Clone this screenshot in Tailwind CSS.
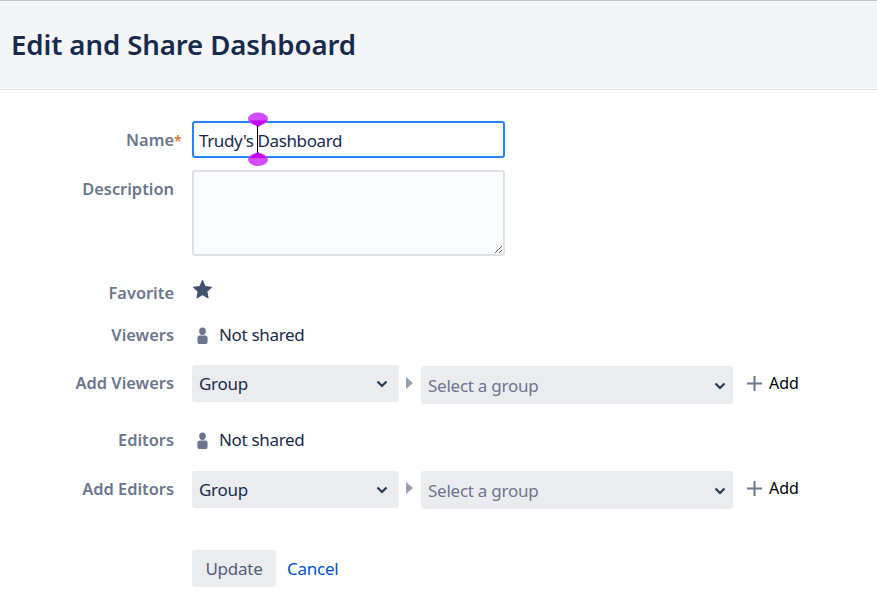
<!DOCTYPE html>
<html><head><meta charset="utf-8"><title>Edit and Share Dashboard</title>
<script src="https://cdn.jsdelivr.net/npm/@tailwindcss/browser@4"></script></head>
<body class="bg-white font-['Noto_Sans',sans-serif] text-[#172b4d] text-[17px] overflow-hidden">
<header class="h-[90px] bg-[#f4f5f7] border-t border-t-[#c1c7d0] border-b border-b-[#dfe1e6] flex items-center pl-[11px]">
  <h1 class="text-[27.6px] font-semibold tracking-[-0.1px]">Edit and Share Dashboard</h1>
</header>
<main class="grid grid-cols-[174px_1fr] gap-x-[18px] pt-[31px] text-[17px]">
  <label class="relative h-[37px] pt-[1px] flex items-center justify-end font-semibold text-[#6b778c] text-[16.4px]">Name<span class="absolute left-full text-[14px] text-[#de5b0b] font-normal">*</span></label>
  <div class="relative w-[313px] h-[37px]">
    <input value="Trudy's Dashboard" class="w-full h-full rounded-[3px] border-2 border-[#2684ff] bg-white pl-[5px] pt-[2px] outline-none text-[17px] tracking-[-0.4px]">
    <svg class="absolute left-[55px] -top-[8px] overflow-visible" width="22" height="55" viewBox="0 0 22 55">
      <ellipse cx="11" cy="6" rx="10" ry="6.500" fill="#d24dff"/>
      <path d="M1.500 7.500C4 8.500 7 11 11 14.500C15 11 18 8.500 20.500 7.500Z" fill="#c400ff"/>
      <rect x="10" y="12" width="1" height="30" fill="#000"/>
      <ellipse cx="11" cy="46.500" rx="10" ry="6.500" fill="#d24dff"/>
      <path d="M1.500 45C4 44 7 41.500 11 39C15 41.500 18 44 20.500 45Z" fill="#c400ff"/>
    </svg>
  </div>

  <label class="mt-[12px] h-[38px] pt-[1px] flex items-center justify-end font-semibold text-[#6b778c] text-[16.4px]">Description</label>
  <textarea class="mt-[12px] w-[313px] h-[86px] rounded-[3px] border-2 border-[#dfe1e6] bg-[#fafbfc] outline-none block"></textarea>

  <label class="mt-[22px] h-[30px] flex items-center justify-end font-semibold text-[#6b778c] text-[16.4px]">Favorite</label>
  <div class="mt-[22px] h-[30px] flex items-start">
    <svg width="21" height="21" viewBox="0 0 20 20" class="mt-[1px]"><path d="M10 1.500l2.500 5.700 6 .6-4.400 4.100 1.200 6-5.300-3-5.300 3 1.200-6L1.500 7.800l6-.6z" fill="#42526e" stroke="#42526e" stroke-width="1" stroke-linejoin="round"/></svg>
  </div>

  <label class="mt-[12px] h-[30px] flex items-center justify-end font-semibold text-[#6b778c] text-[16.4px]">Viewers</label>
  <div class="mt-[12px] h-[30px] flex items-center gap-[11px] pl-[5px]">
    <svg width="11" height="17" viewBox="0 0 13 18" preserveAspectRatio="none"><circle cx="6.500" cy="4.500" r="3.900" fill="#6b778c"/><rect x="0.500" y="9" width="12" height="9" rx="3" fill="#6b778c"/></svg>
    <span class="tracking-[-0.33px]">Not shared</span>
  </div>

  <label class="mt-[15px] h-[37px] flex items-center justify-end font-semibold text-[#6b778c] text-[16.4px]">Add Viewers</label>
  <div class="mt-[15px] flex items-start">
    <div class="relative w-[207px] h-[37px]">
      <select class="appearance-none w-full h-full rounded-[3px] bg-[#ebecf0] pl-[7px] text-[17px] outline-none tracking-[-0.3px]"><option>Group</option></select>
      <svg class="absolute right-[11px] top-[15px]" width="12" height="8" viewBox="0 0 12 8"><path d="M1.500 1.500L6 6l4.500-4.500" fill="none" stroke="#253858" stroke-width="2.200"/></svg>
    </div>
    <svg class="ml-[7px] mr-[7px] mt-[12px]" width="8" height="12" viewBox="0 0 8 12"><path d="M0 0l7 6-7 6z" fill="#97a0af"/></svg>
    <div class="relative w-[312px] h-[38px] mt-[1px]">
      <select class="appearance-none w-full h-full rounded-[3px] bg-[#ebecf0] pl-[7px] pt-[2px] text-[17px] text-[#6b778c] outline-none tracking-[-0.25px]"><option>Select a group</option></select>
      <svg class="absolute right-[7px] top-[16px]" width="12" height="8" viewBox="0 0 12 8"><path d="M1.500 1.500L6 6l4.500-4.500" fill="none" stroke="#253858" stroke-width="2.200"/></svg>
    </div>
    <div class="ml-[14px] h-[36px] flex items-center gap-[7px] text-[16px] text-black">
      <svg width="15" height="15" viewBox="0 0 15 15"><path d="M7.500 0v15M0 7.500h15" stroke="#6b778c" stroke-width="2"/></svg><span>Add</span>
    </div>
  </div>

  <label class="mt-[21px] h-[30px] flex items-center justify-end font-semibold text-[#6b778c] text-[16.4px]">Editors</label>
  <div class="mt-[21px] h-[30px] flex items-center gap-[11px] pl-[5px]">
    <svg width="11" height="17" viewBox="0 0 13 18" preserveAspectRatio="none"><circle cx="6.500" cy="4.500" r="3.900" fill="#6b778c"/><rect x="0.500" y="9" width="12" height="9" rx="3" fill="#6b778c"/></svg>
    <span class="tracking-[-0.33px]">Not shared</span>
  </div>

  <label class="mt-[16px] h-[37px] flex items-center justify-end font-semibold text-[#6b778c] text-[16.4px]">Add Editors</label>
  <div class="mt-[16px] flex items-start">
    <div class="relative w-[207px] h-[37px]">
      <select class="appearance-none w-full h-full rounded-[3px] bg-[#ebecf0] pl-[7px] text-[17px] outline-none tracking-[-0.3px]"><option>Group</option></select>
      <svg class="absolute right-[11px] top-[15px]" width="12" height="8" viewBox="0 0 12 8"><path d="M1.500 1.500L6 6l4.500-4.500" fill="none" stroke="#253858" stroke-width="2.200"/></svg>
    </div>
    <svg class="ml-[7px] mr-[7px] mt-[11px]" width="8" height="12" viewBox="0 0 8 12"><path d="M0 0l7 6-7 6z" fill="#97a0af"/></svg>
    <div class="relative w-[312px] h-[38px]">
      <select class="appearance-none w-full h-full rounded-[3px] bg-[#ebecf0] pl-[7px] pt-[2px] text-[17px] text-[#6b778c] outline-none tracking-[-0.25px]"><option>Select a group</option></select>
      <svg class="absolute right-[7px] top-[16px]" width="12" height="8" viewBox="0 0 12 8"><path d="M1.500 1.500L6 6l4.500-4.500" fill="none" stroke="#253858" stroke-width="2.200"/></svg>
    </div>
    <div class="ml-[14px] -mt-[1px] h-[36px] flex items-center gap-[7px] text-[16px] text-black">
      <svg width="15" height="15" viewBox="0 0 15 15"><path d="M7.500 0v15M0 7.500h15" stroke="#6b778c" stroke-width="2"/></svg><span>Add</span>
    </div>
  </div>

  <div class="mt-[41px]"></div>
  <div class="mt-[41px] flex items-center gap-[11px]">
    <button class="h-[37px] w-[84px] pt-[1px] rounded-[3px] bg-[#ebecf0] text-[#505f79] tracking-[-0.25px]">Update</button>
    <a class="pt-[1px] text-[#0052cc] tracking-[-0.25px]">Cancel</a>
  </div>
</main>
</body></html>
